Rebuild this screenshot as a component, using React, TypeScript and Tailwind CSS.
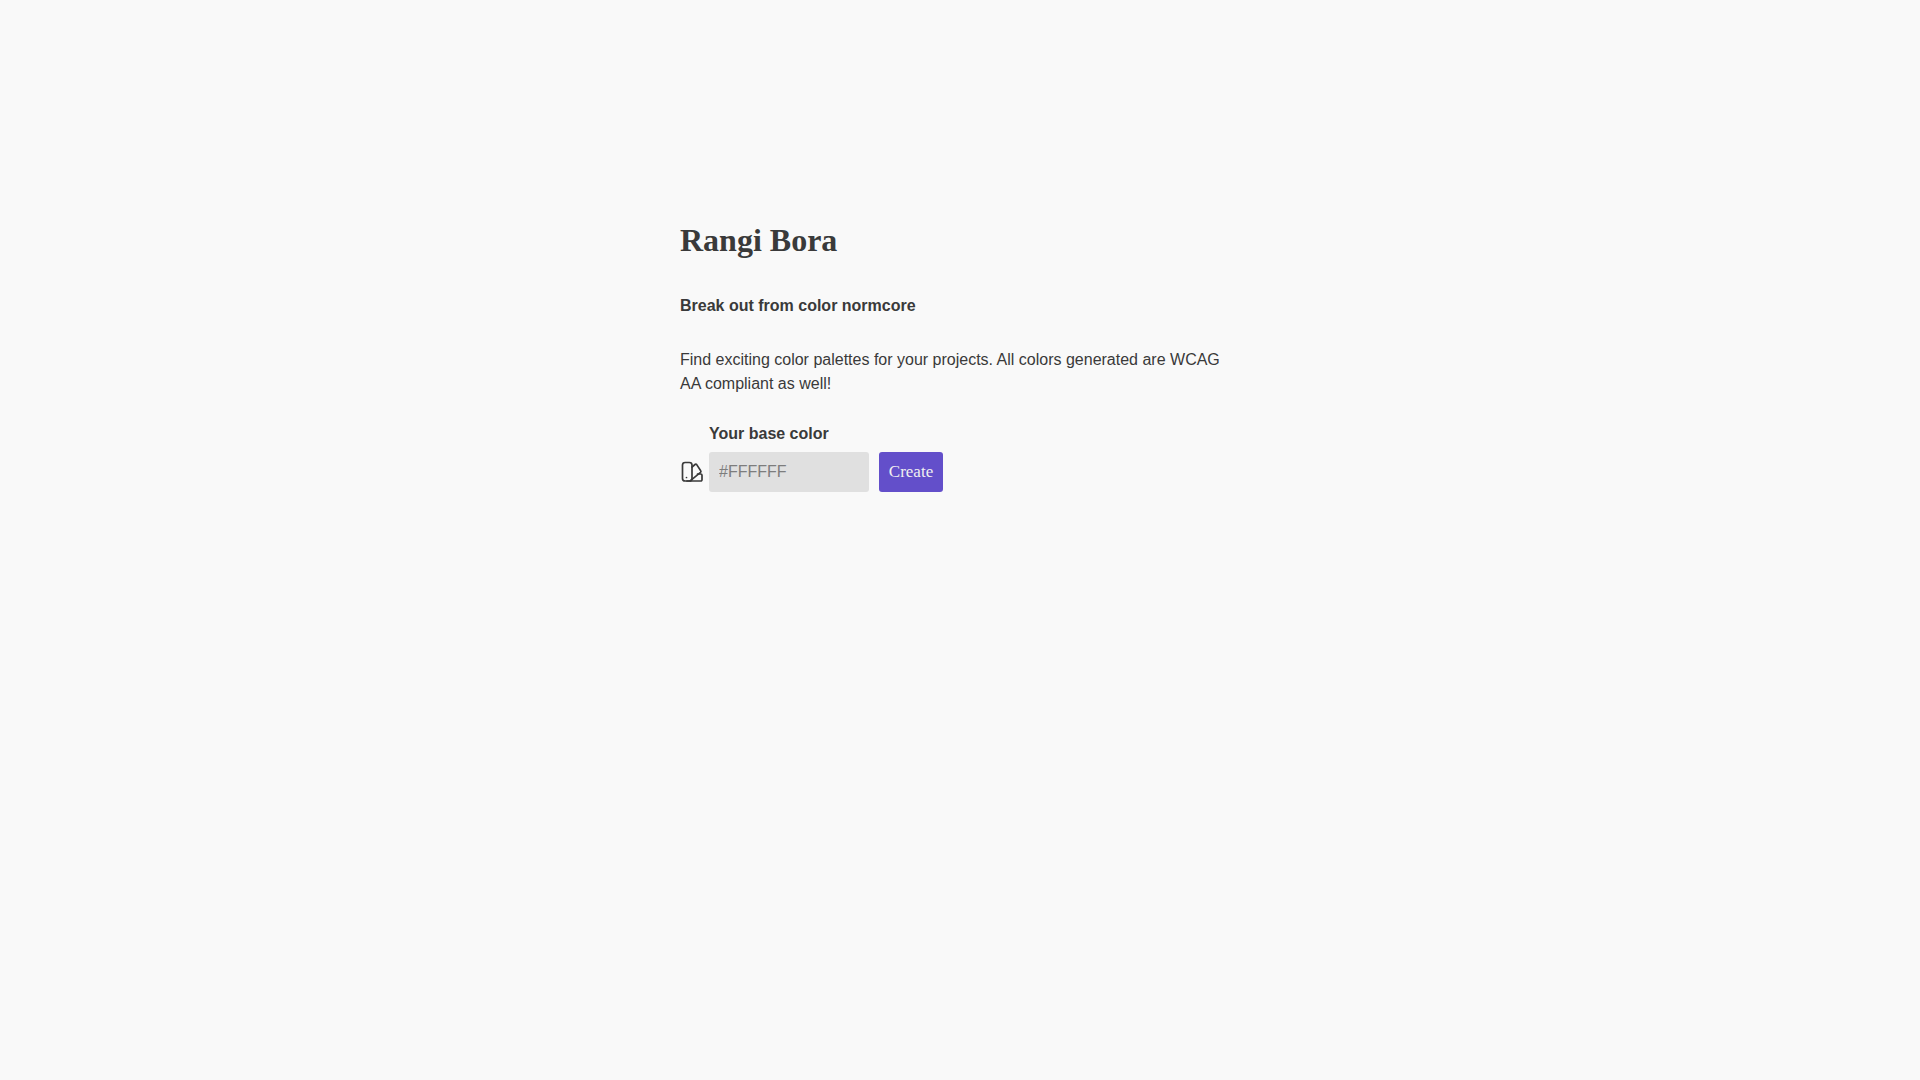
import React from "react";

function SwatchIcon() {
  return (
    <svg
      viewBox="0 0 24 24"
      fill="none"
      stroke="currentColor"
      strokeWidth="1.7"
      strokeLinecap="round"
      strokeLinejoin="round"
      className="w-6 h-6 mr-[5px] mb-2 shrink-0"
    >
      <rect x="2.5" y="2.5" width="9.5" height="18.5" rx="2.6" />
      <path d="M12 7.2l3-2.7a1.2 1.2 0 0 1 1.7.1l4 6.2a1.2 1.2 0 0 1-.2 1.6L10.5 20.6" />
      <path d="M17.5 14h3.3a1.2 1.2 0 0 1 1.2 1.2v4.6a1.2 1.2 0 0 1-1.2 1.2H7" />
      <path d="M6.5 17.5v.01" />
    </svg>
  );
}

export default function App() {
  return (
    <div className="min-h-screen bg-[#f9f9f9] text-[#3a3a3a] font-['Liberation_Sans',sans-serif]">
      <div className="ml-[680px] w-[560px] pt-[222px]">
        <h1 className="text-[32px] leading-[37px] font-bold font-['Liberation_Serif',serif]">Rangi Bora</h1>
        <h2 className="mt-[38px] text-base leading-[18px] font-bold">Break out from color normcore</h2>
        <p className="mt-[33px] text-base leading-6">
          Find exciting color palettes for your projects. All colors generated are WCAG AA compliant as well!
        </p>
        <form className="mt-[29px] flex items-end">
          <SwatchIcon />
          <div className="flex flex-col">
            <label className="text-base leading-[18px] font-bold mb-[9px]">Your base color</label>
            <input
              placeholder="#FFFFFF"
              className="w-[160px] h-10 px-[10px] rounded-[3px] bg-[#e0e0e0] text-base outline-none placeholder:text-[#7d7d7d]"
            />
          </div>
          <button
            type="button"
            className="ml-[10px] w-[64px] h-10 rounded-[3px] bg-[#634fca] text-[#f0f0f0] text-[17px] font-['Liberation_Serif',serif]"
          >
            Create
          </button>
        </form>
      </div>
    </div>
  );
}
